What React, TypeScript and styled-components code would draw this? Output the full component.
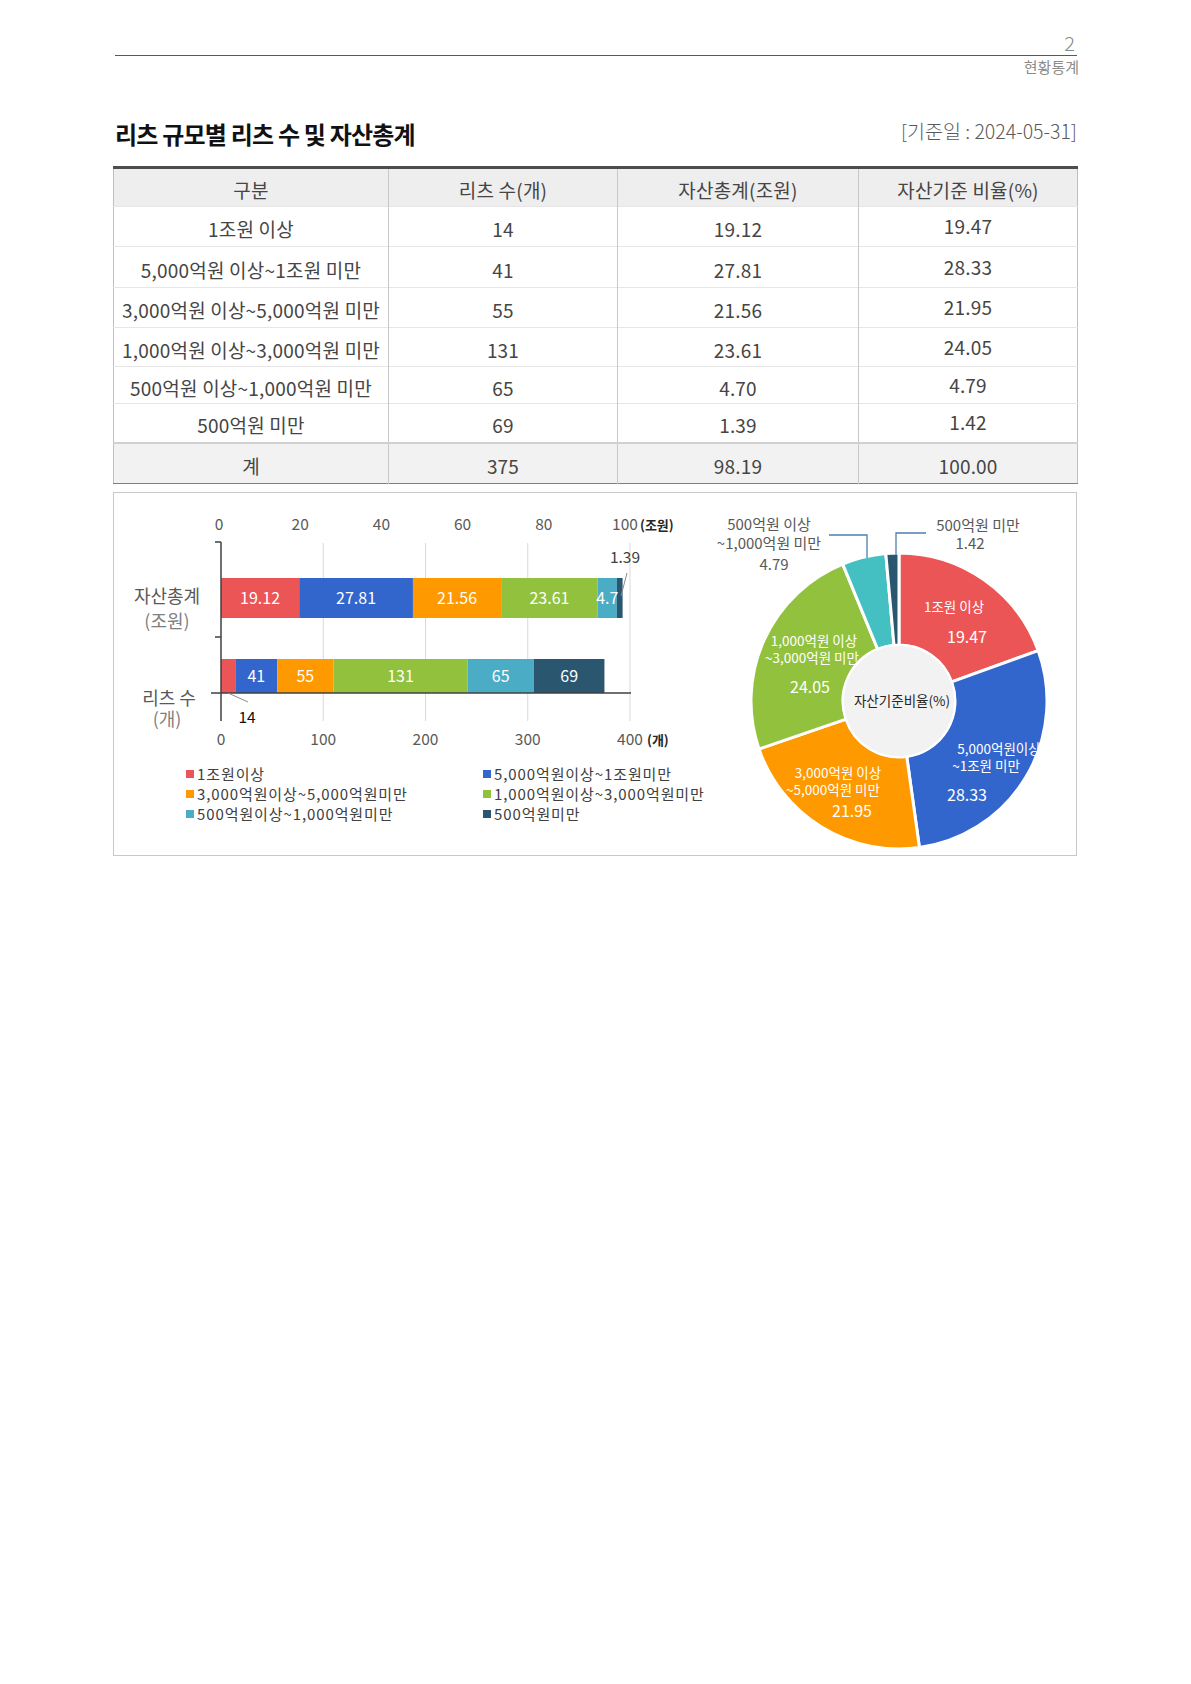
import React from "react";
import styled, { createGlobalStyle } from "styled-components";

const GlobalStyle = createGlobalStyle`
  html, body { margin: 0; padding: 0; background: #ffffff; }
  body { font-family: "Noto Sans CJK KR", "Noto Sans", sans-serif; color: #404040; }
`;

const FONT = `"Noto Sans CJK KR", "Noto Sans", sans-serif`;

const COLORS = {
  red: "#EB5555",
  blue: "#3366CC",
  orange: "#FF9900",
  green: "#92C13E",
  teal: "#4BACC6",
  pieTeal: "#45C0C2",
  dark: "#2B5670",
};

const Page = styled.div`
  width: 1191px;
  min-height: 1684px;
  box-sizing: border-box;
  padding: 31px 114px 0 113px;
  display: flex;
  flex-direction: column;
`;

const PageNumber = styled.div`
  text-align: right;
  font-size: 20px;
  line-height: 24px;
  font-weight: 300;
  color: #8a8a8a;
  padding-right: 2px;
`;

const Rule = styled.hr`
  margin: 0 0 0 2px;
  border: 0;
  border-top: 1px solid #595959;
`;

const SectionName = styled.div`
  text-align: right;
  font-size: 15px;
  line-height: 22px;
  color: #8c8c8c;
  margin-right: -2px;
`;

const TitleRow = styled.div`
  margin-top: 41px;
  display: flex;
  justify-content: space-between;
  align-items: center;
  height: 30px;
  padding-left: 2px;
`;

const Title = styled.h1`
  margin: 0;
  font-size: 24px;
  line-height: 30px;
  font-weight: 700;
  letter-spacing: -0.8px;
  color: #111111;
`;

const DateNote = styled.div`
  font-size: 19.5px;
  line-height: 24px;
  color: #595959;
  margin-bottom: 6px;
  font-weight: 300;
`;

const Table = styled.table`
  width: 100%;
  margin-top: 17px;
  border-collapse: collapse;
  table-layout: fixed;
  border-top: 3px solid #4d4d4d;
  border-left: 1px solid #bfbfbf;
  border-right: 1px solid #bfbfbf;
  font-size: 19px;
  letter-spacing: 0.2px;
  color: #454545;
`;

const HeadCell = styled.th`
  height: 39px;
  padding: 4px 0 0;
  box-sizing: border-box;
  background: #eeeeee;
  font-weight: 400;
  text-align: center;
  border-left: 1px solid #c8c8c8;
  &:first-child { border-left: 0; }
`;

const Row = styled.tr<{ $total?: boolean }>`
  background: ${(p) => (p.$total ? "#f2f2f2" : "#ffffff")};
  border-top: ${(p) => (p.$total ? "2px solid #d0d0d0" : "1px solid #e6e6e6")};
  border-bottom: ${(p) => (p.$total ? "1px solid #7f7f7f" : "0")};
`;

const Cell = styled.td<{ $h: number; $raised?: boolean }>`
  height: ${(p) => p.$h}px;
  padding: ${(p) => (p.$raised ? "0 0 2px" : "4px 0 0")};
  box-sizing: border-box;
  text-align: center;
  vertical-align: middle;
  border-left: 1px solid #c8c8c8;
  &:first-child { border-left: 0; }
`;

const ChartBox = styled.div`
  margin-top: 8px;
  height: 364px;
  box-sizing: border-box;
  border: 1px solid #c8c8c8;
  display: grid;
  grid-template-columns: 580px 1fr;
`;

const LeftColumn = styled.div`
  display: flex;
  flex-direction: column;
`;

const ChartSvg = styled.svg`
  display: block;
  text { font-family: ${FONT}; }
`;

const Legend = styled.div`
  display: grid;
  grid-template-columns: 297px auto;
  margin: 6px 0 0 72px;
`;

const LegendItem = styled.div`
  display: flex;
  align-items: center;
  gap: 3px;
  font-size: 15px;
  line-height: 20px;
  letter-spacing: 0.9px;
  color: #404040;
  white-space: nowrap;
`;

const Swatch = styled.span<{ $c: string }>`
  width: 8px;
  height: 8px;
  background: ${(p) => p.$c};
  flex: none;
`;

const rows = [
  { name: "1조원 이상", count: "14", asset: "19.12", ratio: "19.47", h: 40 },
  { name: "5,000억원 이상~1조원 미만", count: "41", asset: "27.81", ratio: "28.33", h: 41 },
  { name: "3,000억원 이상~5,000억원 미만", count: "55", asset: "21.56", ratio: "21.95", h: 40 },
  { name: "1,000억원 이상~3,000억원 미만", count: "131", asset: "23.61", ratio: "24.05", h: 39 },
  { name: "500억원 이상~1,000억원 미만", count: "65", asset: "4.70", ratio: "4.79", h: 37 },
  { name: "500억원 미만", count: "69", asset: "1.39", ratio: "1.42", h: 39 },
];

const segColors = [COLORS.red, COLORS.blue, COLORS.orange, COLORS.green, COLORS.teal, COLORS.dark];
const assets = [19.12, 27.81, 21.56, 23.61, 4.7, 1.39];
const counts = [14, 41, 55, 131, 65, 69];

const X0 = 107;
const AXW = 409;

function BarChart() {
  const s1 = AXW / 100;
  const s2 = AXW / 400;
  let acc1 = X0;
  const seg1 = assets.map((v, i) => {
    const x = acc1;
    const w = v * s1;
    acc1 += w;
    return { x, w, v, c: segColors[i] };
  });
  let acc2 = X0;
  const seg2 = counts.map((v, i) => {
    const x = acc2;
    const w = v * s2;
    acc2 += w;
    return { x, w, v, c: segColors[i] };
  });
  const topTicks = [0, 20, 40, 60, 80, 100];
  const botTicks = [0, 100, 200, 300, 400];
  return (
    <ChartSvg width={580} height={265} viewBox="0 0 580 265">
      {botTicks.slice(1).map((t) => (
        <line key={t} x1={X0 + t * s2} x2={X0 + t * s2} y1={50} y2={228} stroke="#d9d9d9" strokeWidth={1} />
      ))}
      {topTicks.map((t) => (
        <text key={t} x={105 + t * 4.06} y={37} fontSize={15.5} fill="#595959" textAnchor="middle">
          {t}
        </text>
      ))}
      <text x={526} y={37} fontSize={13} fill="#262626" fontWeight={600}>(조원)</text>
      {botTicks.map((t) => (
        <text key={t} x={X0 + t * s2} y={252} fontSize={15.5} fill="#595959" textAnchor="middle">
          {t}
        </text>
      ))}
      <text x={533} y={252} fontSize={13} fill="#262626" fontWeight={600}>(개)</text>

      {seg1.map((s, i) => (
        <rect key={i} x={s.x} y={85} width={s.w} height={40} fill={s.c} />
      ))}
      {seg1.slice(0, 5).map((s, i) => (
        <text key={i} x={s.x + s.w / 2} y={111} fontSize={16} fill="#ffffff" textAnchor="middle">
          {s.v}
        </text>
      ))}
      {seg2.map((s, i) => (
        <rect key={i} x={s.x} y={166} width={s.w} height={34} fill={s.c} />
      ))}
      {seg2.slice(1).map((s, i) => (
        <text key={i} x={s.x + s.w / 2} y={189} fontSize={16} fill="#ffffff" textAnchor="middle">
          {s.v}
        </text>
      ))}

      <line x1={X0} x2={X0} y1={49} y2={228} stroke="#404040" strokeWidth={1.5} />
      <line x1={101} x2={X0} y1={49} y2={49} stroke="#404040" strokeWidth={1.5} />
      <line x1={101} x2={X0} y1={144} y2={144} stroke="#404040" strokeWidth={1.5} />
      <line x1={97} x2={517} y1={200} y2={200} stroke="#404040" strokeWidth={1.5} />

      <line x1={513} y1={80} x2={507} y2={103} stroke="#8c8c8c" strokeWidth={1} />
      <text x={511} y={70} fontSize={15.5} fill="#404040" textAnchor="middle">1.39</text>
      <line x1={114} y1={200} x2={134} y2={209} stroke="#8c8c8c" strokeWidth={1} />
      <text x={133} y={230} fontSize={15.5} fill="#111111" textAnchor="middle">14</text>

      <text x={53} y={110} fontSize={18} fill="#595959" textAnchor="middle">자산총계</text>
      <text x={53} y={135} fontSize={18} fill="#7f7f7f" textAnchor="middle">(조원)</text>
      <text x={55} y={212} fontSize={18} fill="#595959" textAnchor="middle">리츠 수</text>
      <text x={53} y={233} fontSize={18} fill="#7f7f7f" textAnchor="middle">(개)</text>
    </ChartSvg>
  );
}

const pieData = [
  { v: 19.47, c: COLORS.red },
  { v: 28.33, c: COLORS.blue },
  { v: 21.95, c: COLORS.orange },
  { v: 24.05, c: COLORS.green },
  { v: 4.79, c: COLORS.pieTeal },
  { v: 1.42, c: COLORS.dark },
];

function arcPath(cx: number, cy: number, r0: number, r1: number, a0: number, a1: number) {
  const p = (r: number, a: number) => [
    cx + r * Math.sin((a * Math.PI) / 180),
    cy - r * Math.cos((a * Math.PI) / 180),
  ];
  const large = a1 - a0 > 180 ? 1 : 0;
  const [x0, y0] = p(r1, a0);
  const [x1, y1] = p(r1, a1);
  const [x2, y2] = p(r0, a1);
  const [x3, y3] = p(r0, a0);
  return `M${x0} ${y0} A${r1} ${r1} 0 ${large} 1 ${x1} ${y1} L${x2} ${y2} A${r0} ${r0} 0 ${large} 0 ${x3} ${y3} Z`;
}

function PieChart() {
  const dx = -21;
  const dy = 1;
  const cx = 226 + dx;
  const cy = 207 + dy;
  const total = pieData.reduce((a, d) => a + d.v, 0);
  let acc = 0;
  const slices = pieData.map((d) => {
    const a0 = (acc / total) * 360;
    acc += d.v;
    const a1 = (acc / total) * 360;
    return { ...d, a0, a1 };
  });
  const W = "#ffffff";
  const G = "#595959";
  const L = (x: number) => x + dx;
  const T = (y: number) => y + dy;
  return (
    <ChartSvg width={382} height={362} viewBox="0 0 382 362">
      {slices.map((s, i) => (
        <path key={i} d={arcPath(cx, cy, 56, 148, s.a0, s.a1)} fill={s.c} stroke="#ffffff" strokeWidth={3} strokeLinejoin="round" />
      ))}
      <circle cx={cx} cy={cy} r={56} fill="#f2f2f2" stroke="#ffffff" strokeWidth={2} />
      <text x={cx + 3} y={cy + 5} fontSize={13.5} fill="#262626" textAnchor="middle">자산기준비율(%)</text>

      <text x={L(281)} y={T(118)} fontSize={13.5} fill={W} textAnchor="middle">1조원 이상</text>
      <text x={L(294)} y={T(149)} fontSize={16} fill={W} textAnchor="middle">19.47</text>

      <text x={L(326)} y={T(260)} fontSize={13.5} fill={W} textAnchor="middle">5,000억원이상</text>
      <text x={L(313)} y={T(277)} fontSize={13.5} fill={W} textAnchor="middle">~1조원 미만</text>
      <text x={L(294)} y={T(307)} fontSize={16} fill={W} textAnchor="middle">28.33</text>

      <text x={L(165)} y={T(284)} fontSize={13.5} fill={W} textAnchor="middle">3,000억원 이상</text>
      <text x={L(160)} y={T(301)} fontSize={13.5} fill={W} textAnchor="middle">~5,000억원 미만</text>
      <text x={L(179)} y={T(323)} fontSize={16} fill={W} textAnchor="middle">21.95</text>

      <text x={L(141)} y={T(152)} fontSize={13.5} fill={W} textAnchor="middle">1,000억원 이상</text>
      <text x={L(139)} y={T(169)} fontSize={13.5} fill={W} textAnchor="middle">~3,000억원 미만</text>
      <text x={L(137)} y={T(199)} fontSize={16} fill={W} textAnchor="middle">24.05</text>

      <text x={L(96)} y={T(36)} fontSize={15} fill={G} textAnchor="middle">500억원 이상</text>
      <text x={L(96)} y={T(55)} fontSize={15} fill={G} textAnchor="middle">~1,000억원 미만</text>
      <text x={L(101)} y={T(76)} fontSize={15} fill={G} textAnchor="middle">4.79</text>

      <text x={L(305)} y={T(37)} fontSize={15} fill={G} textAnchor="middle">500억원 미만</text>
      <text x={L(297)} y={T(55)} fontSize={15} fill={G} textAnchor="middle">1.42</text>

      <polyline points={`${L(194)},${T(64)} ${L(194)},${T(41)} ${L(156)},${T(41)}`} fill="none" stroke="#4f7fb0" strokeWidth={1.3} />
      <polyline points={`${L(223)},${T(61)} ${L(223)},${T(39)} ${L(253)},${T(39)}`} fill="none" stroke="#4f7fb0" strokeWidth={1.3} />
    </ChartSvg>
  );
}

const legendItems = [
  { label: "1조원이상", c: COLORS.red },
  { label: "5,000억원이상~1조원미만", c: COLORS.blue },
  { label: "3,000억원이상~5,000억원미만", c: COLORS.orange },
  { label: "1,000억원이상~3,000억원미만", c: COLORS.green },
  { label: "500억원이상~1,000억원미만", c: COLORS.teal },
  { label: "500억원미만", c: COLORS.dark },
];

export default function App() {
  return (
    <>
      <GlobalStyle />
      <Page>
        <PageNumber>2</PageNumber>
        <Rule />
        <SectionName>현황통계</SectionName>
        <TitleRow>
          <Title>리츠 규모별 리츠 수 및 자산총계</Title>
          <DateNote>[기준일 : 2024-05-31]</DateNote>
        </TitleRow>
        <Table>
          <colgroup>
            <col style={{ width: 275 }} />
            <col style={{ width: 229 }} />
            <col style={{ width: 241 }} />
            <col style={{ width: 219 }} />
          </colgroup>
          <thead>
            <tr>
              <HeadCell>구분</HeadCell>
              <HeadCell>리츠 수(개)</HeadCell>
              <HeadCell>자산총계(조원)</HeadCell>
              <HeadCell>자산기준 비율(%)</HeadCell>
            </tr>
          </thead>
          <tbody>
            {rows.map((r) => (
              <Row key={r.name}>
                <Cell $h={r.h}>{r.name}</Cell>
                <Cell $h={r.h}>{r.count}</Cell>
                <Cell $h={r.h}>{r.asset}</Cell>
                <Cell $h={r.h} $raised>{r.ratio}</Cell>
              </Row>
            ))}
            <Row $total>
              <Cell $h={41}>계</Cell>
              <Cell $h={41}>375</Cell>
              <Cell $h={41}>98.19</Cell>
              <Cell $h={41}>100.00</Cell>
            </Row>
          </tbody>
        </Table>
        <ChartBox>
          <LeftColumn>
            <BarChart />
            <Legend>
              {legendItems.map((l) => (
                <LegendItem key={l.label}>
                  <Swatch $c={l.c} />
                  {l.label}
                </LegendItem>
              ))}
            </Legend>
          </LeftColumn>
          <PieChart />
        </ChartBox>
      </Page>
    </>
  );
}
